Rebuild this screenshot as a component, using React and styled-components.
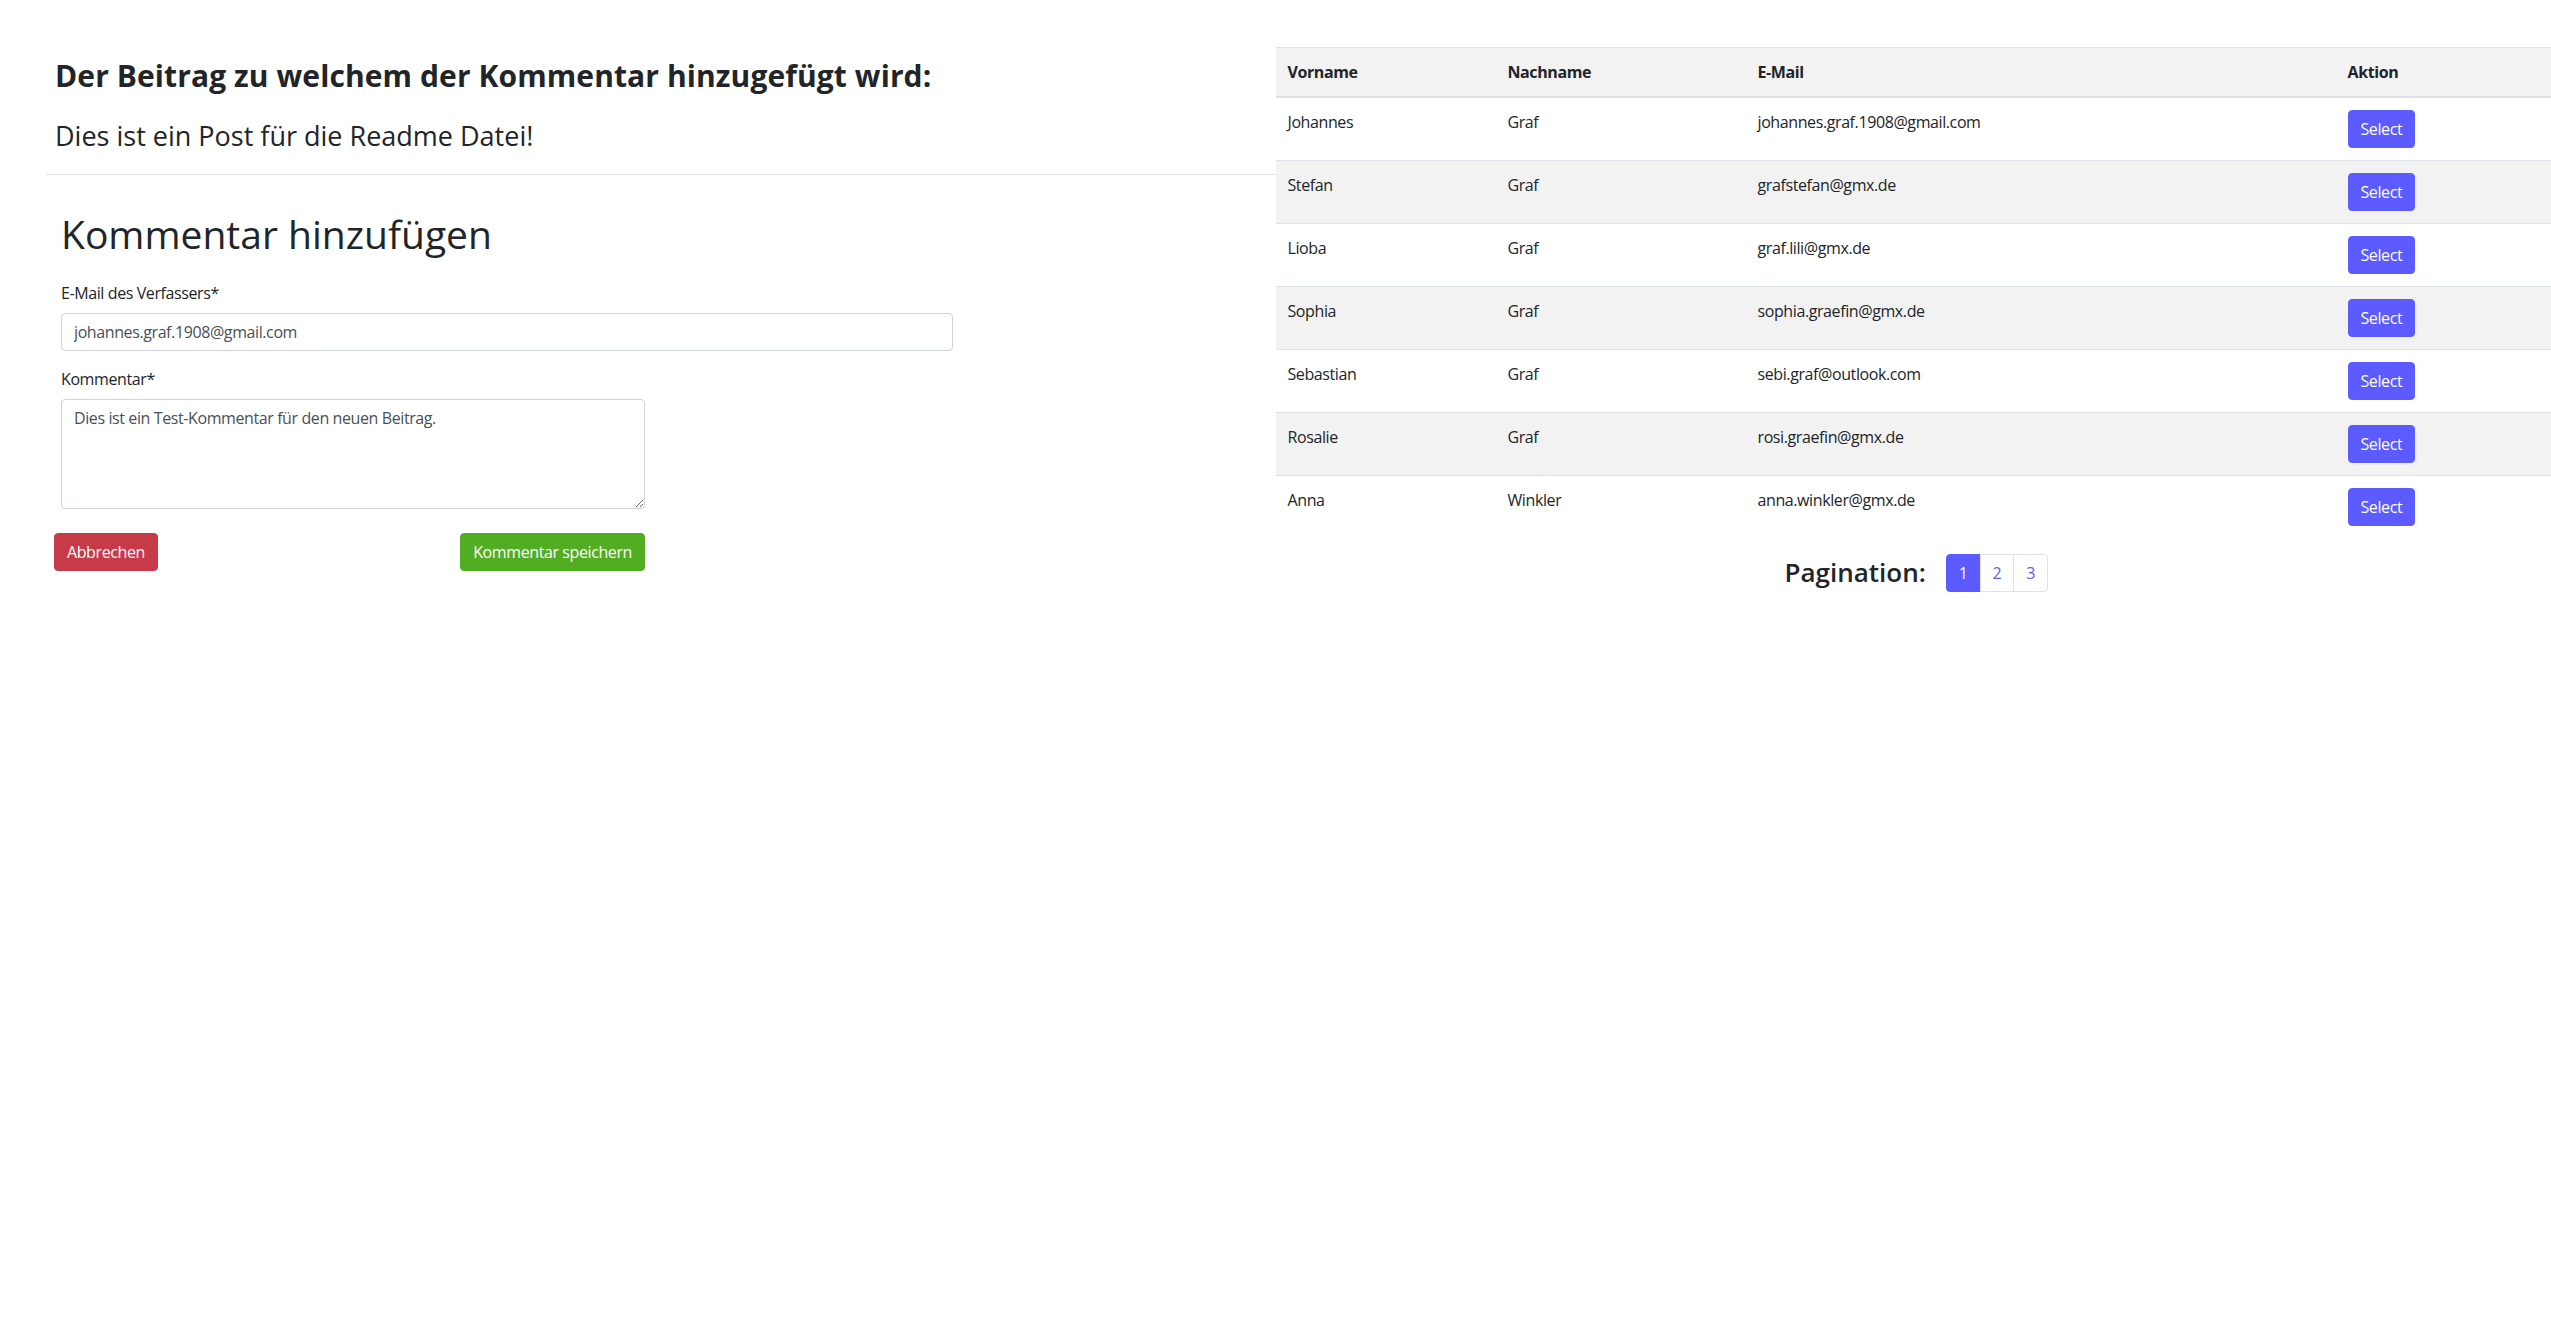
import React from "react";
import styled, { createGlobalStyle } from "styled-components";

const GlobalStyle = createGlobalStyle`
  body {
    margin: 0;
    font-family: "Open Sans", "Noto Sans", sans-serif;
    font-size: 16px;
    line-height: 1.5;
    letter-spacing: -0.4px;
    color: #212529;
    background: #fff;
  }
  * { box-sizing: border-box; }
`;

const accent = "#5b5bff";
const line = "#dee2e6";

const SplitView = styled.div`
  display: grid;
  grid-template-columns: 50% 50%;
`;

const Left = styled.div`
  padding-left: 46px;
`;

const PostInfo = styled.div`
  padding: 58px 0 22px 9px;
  border-bottom: 1px solid #e3e3e3;
`;

const PostTitle = styled.h3`
  margin: 0 0 26px;
  font-size: 30px;
  font-weight: 700;
  line-height: 1.2;
  letter-spacing: 0.1px;
`;

const PostText = styled.h4`
  margin: 0;
  font-size: 27px;
  font-weight: 500;
  line-height: 1.2;
  letter-spacing: 0;
`;

const Form = styled.form`
  padding: 36px 0 0 15px;
`;

const FormTitle = styled.h1`
  margin: 0 0 23px;
  font-size: 39px;
  font-weight: 500;
  line-height: 1.2;
  letter-spacing: 0;
`;

const Group = styled.div`
  margin-bottom: ${(p) => p.$gap || 16}px;
`;

const Label = styled.label`
  display: block;
  margin-bottom: 8px;
`;

const Input = styled.input`
  display: block;
  width: ${(p) => p.$width}px;
  height: 38px;
  padding: 6px 12px;
  font: inherit;
  letter-spacing: inherit;
  color: #495057;
  border: 1px solid #ced4da;
  border-radius: 4px;
`;

const TextArea = styled.textarea`
  display: block;
  width: 584px;
  height: 110px;
  padding: 6px 12px;
  font: inherit;
  letter-spacing: inherit;
  color: #495057;
  border: 1px solid #ced4da;
  border-radius: 4px;
`;

const ButtonRow = styled.div`
  display: flex;
  justify-content: space-between;
  width: 591px;
  margin-left: -7px;
`;

const Button = styled.button`
  padding: 6px 12px;
  font: inherit;
  letter-spacing: inherit;
  line-height: 24px;
  color: #fff;
  background: ${(p) => p.$color};
  border: 1px solid ${(p) => p.$color};
  border-radius: 4px;
  cursor: pointer;
`;

const Right = styled.div`
  padding-top: 47px;
`;

const Table = styled.table`
  width: 100%;
  border-collapse: collapse;
  table-layout: fixed;
`;

const Th = styled.th`
  padding: 12px;
  text-align: left;
  font-weight: 700;
  border-top: 1px solid ${line};
  border-bottom: 2px solid ${line};
`;

const Row = styled.tr`
  background: ${(p) => (p.$striped ? "#f2f2f2" : "#fff")};
`;

const HeadRow = styled.tr`
  background: #f2f2f2;
`;

const Td = styled.td`
  padding: 12px;
  vertical-align: top;
  border-top: 1px solid ${line};
`;

const PaginationBar = styled.div`
  display: flex;
  justify-content: center;
  align-items: center;
  gap: 20px;
  margin-top: 16px;
  padding-left: 6px;
`;

const PaginationLabel = styled.span`
  font-size: 26px;
  font-weight: 600;
  line-height: 1.2;
  letter-spacing: 0;
`;

const Pages = styled.div`
  display: flex;
`;

const PageLink = styled.a`
  display: block;
  padding: 6px 12px;
  margin-left: -1px;
  line-height: 24px;
  color: ${(p) => (p.$active ? "#fff" : accent)};
  background: ${(p) => (p.$active ? accent : "#fff")};
  border: 1px solid ${(p) => (p.$active ? accent : line)};
  text-decoration: none;

  &:first-child {
    margin-left: 0;
    border-radius: 4px 0 0 4px;
  }
  &:last-child {
    border-radius: 0 4px 4px 0;
  }
`;

const users = [
  ["Johannes", "Graf", "johannes.graf.1908@gmail.com"],
  ["Stefan", "Graf", "grafstefan@gmx.de"],
  ["Lioba", "Graf", "graf.lili@gmx.de"],
  ["Sophia", "Graf", "sophia.graefin@gmx.de"],
  ["Sebastian", "Graf", "sebi.graf@outlook.com"],
  ["Rosalie", "Graf", "rosi.graefin@gmx.de"],
  ["Anna", "Winkler", "anna.winkler@gmx.de"],
];

const App = () => {
  return (
    <>
      <GlobalStyle />
      <SplitView>
        <Left>
          <PostInfo>
            <PostTitle>Der Beitrag zu welchem der Kommentar hinzugefügt wird:</PostTitle>
            <PostText>Dies ist ein Post für die Readme Datei!</PostText>
          </PostInfo>
          <Form onSubmit={(e) => e.preventDefault()}>
            <FormTitle>Kommentar hinzufügen</FormTitle>
            <Group>
              <Label>E-Mail des Verfassers*</Label>
              <Input $width={892} defaultValue="johannes.graf.1908@gmail.com" />
            </Group>
            <Group $gap={24}>
              <Label>Kommentar*</Label>
              <TextArea
                rows={4}
                defaultValue="Dies ist ein Test-Kommentar für den neuen Beitrag."
              />
            </Group>
            <ButtonRow>
              <Button type="button" $color="#c73a48">
                Abbrechen
              </Button>
              <Button type="submit" $color="#52ad22">
                Kommentar speichern
              </Button>
            </ButtonRow>
          </Form>
        </Left>
        <Right>
          <Table>
            <colgroup>
              <col style={{ width: 220 }} />
              <col style={{ width: 250 }} />
              <col style={{ width: 590 }} />
              <col />
            </colgroup>
            <thead>
              <HeadRow>
                <Th>Vorname</Th>
                <Th>Nachname</Th>
                <Th>E-Mail</Th>
                <Th>Aktion</Th>
              </HeadRow>
            </thead>
            <tbody>
              {users.map(([first, last, mail], i) => (
                <Row key={mail} $striped={i % 2 === 1}>
                  <Td>{first}</Td>
                  <Td>{last}</Td>
                  <Td>{mail}</Td>
                  <Td>
                    <Button type="button" $color={accent}>
                      Select
                    </Button>
                  </Td>
                </Row>
              ))}
            </tbody>
          </Table>
          <PaginationBar>
            <PaginationLabel>Pagination:</PaginationLabel>
            <Pages>
              <PageLink href="#" $active>
                1
              </PageLink>
              <PageLink href="#">2</PageLink>
              <PageLink href="#">3</PageLink>
            </Pages>
          </PaginationBar>
        </Right>
      </SplitView>
    </>
  );
};

export default App;
